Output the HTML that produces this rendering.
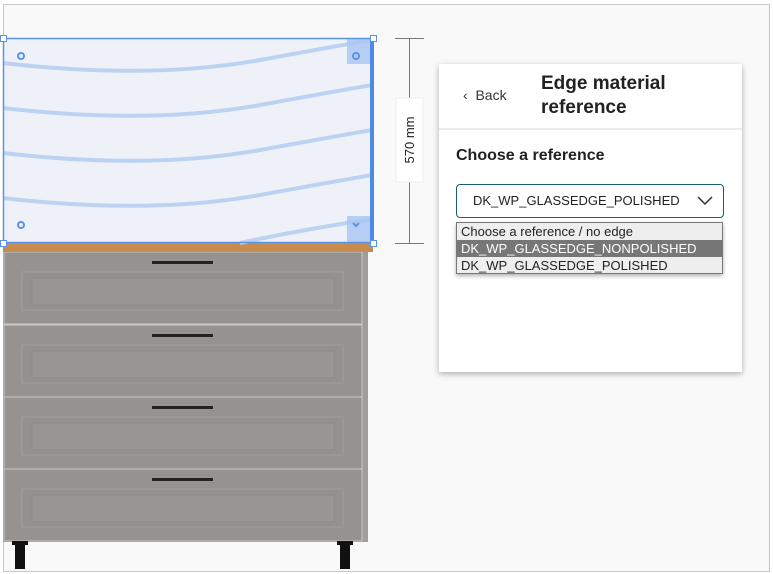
<!DOCTYPE html><html><head><style>
body{margin:0;width:773px;height:574px;background:#fff;position:relative;overflow:hidden;font-family:"Liberation Sans",sans-serif}
.abs{position:absolute}
</style></head><body>
<div class="abs" style="left:3px;top:4px;width:765px;height:566px;background:#f9f9f9;border:1px solid #c8c8c8"></div>
<svg class="abs" style="left:0;top:0" width="773" height="574">
<rect x="3" y="252" width="365" height="290" fill="#8f8c89"/>
<rect x="362" y="252" width="6" height="290" fill="#a09e9c"/>
<defs><g id="dr">
<rect x="4" y="0" width="358" height="72" fill="#959290" stroke="#c9c9c9" stroke-width="1"/>
<rect x="22" y="20" width="321" height="38" fill="#93908e" stroke="#a19f9d"/>
<rect x="32" y="26" width="302" height="27" fill="#989593" stroke="#8e8b89"/>
<rect x="152" y="9" width="61" height="3" fill="#222"/>
</g></defs>
<use href="#dr" y="252"/><use href="#dr" y="325"/><use href="#dr" y="397"/><use href="#dr" y="469"/>
<rect x="3" y="243" width="370" height="9" fill="#c88d4e"/>
<rect x="12" y="541" width="16" height="4" fill="#111"/><rect x="15" y="545" width="10" height="24" fill="#111"/>
<rect x="337" y="541" width="16" height="4" fill="#111"/><rect x="340" y="545" width="10" height="24" fill="#111"/>
<rect x="3" y="38" width="370" height="205" fill="#eff1f8"/>
<g stroke="#bcd2f2" stroke-width="4" fill="none">
<path d="M3 63 Q150 80 260 60 T373 40"/>
<path d="M3 108 Q150 125 260 105 T373 85"/>
<path d="M3 153 Q150 170 260 150 T373 130"/>
<path d="M3 198 Q150 215 260 195 T373 175"/>
<path d="M240 243 Q300 230 373 219"/>
</g>
<rect x="347" y="39" width="25" height="25" fill="#a8c6f2" opacity=".8"/>
<rect x="347" y="216" width="25" height="26" fill="#a8c6f2" opacity=".8"/>
<g fill="none" stroke="#5b93e6" stroke-width="2">
<circle cx="21" cy="56" r="3"/><circle cx="356" cy="56" r="3"/><circle cx="21" cy="225" r="3"/><path d="M353 223l3 3 3-3"/>
</g>
<rect x="3.5" y="38.5" width="369" height="204" fill="none" stroke="#5b93e6" stroke-width="1.5"/>
<rect x="370" y="39" width="4" height="204" fill="#4d8ae6"/>
<g fill="#fff" stroke="#5b93e6"><rect x="0.5" y="35.5" width="6" height="6"/><rect x="370.5" y="35.5" width="6" height="6"/><rect x="0.5" y="240.5" width="6" height="6"/><rect x="370.5" y="240.5" width="6" height="6"/></g>
<g stroke="#777" stroke-width="1"><line x1="395" y1="38.5" x2="424" y2="38.5"/><line x1="395" y1="243.5" x2="424" y2="243.5"/><line x1="409.5" y1="38" x2="409.5" y2="243"/></g>
<rect x="396" y="98" width="27" height="84" fill="#fff" stroke="#eee"/>
<text x="0" y="0" transform="translate(414 140) rotate(-90)" text-anchor="middle" font-family="Liberation Sans" font-size="13" fill="#222">570 mm</text>
</svg>
<div class="abs" style="left:439px;top:64px;width:303px;height:308px;background:#fff;box-shadow:0 2px 6px rgba(0,0,0,.3)">
<div class="abs" style="left:0;top:64px;width:303px;height:2px;background:#ececec"></div>
<div class="abs" style="left:24px;top:23px;font-size:14px;color:#333">‹&nbsp; Back</div>
<div class="abs" style="left:102px;top:8px;font-size:19px;font-weight:bold;line-height:24px;color:#222">Edge material<br>reference</div>
<div class="abs" style="left:17px;top:83px;font-size:16px;font-weight:bold;color:#222">Choose a reference</div>
<div class="abs" style="left:17px;top:120px;border:1px solid #1e5d6e;border-radius:4px;font-size:13px;line-height:32px;color:#222;box-sizing:border-box;width:268px;height:34px;padding-left:16px">DK_WP_GLASSEDGE_POLISHED<svg class="abs" style="left:240px;top:11px" width="16" height="10"><path d="M1 1l7 7 7-7" fill="none" stroke="#333" stroke-width="1.5"/></svg></div>
<div class="abs" style="left:17px;top:158px;width:267px;height:52px;border:1px solid #777;background:#eee;box-sizing:border-box;font-size:13px;line-height:17px;color:#222;box-shadow:0 2px 4px rgba(0,0,0,.3)">
<div style="padding-left:4px">Choose a reference / no edge</div>
<div style="padding-left:4px;background:#777;color:#fff">DK_WP_GLASSEDGE_NONPOLISHED</div>
<div style="padding-left:4px">DK_WP_GLASSEDGE_POLISHED</div>
</div>
</div>
</body></html>
